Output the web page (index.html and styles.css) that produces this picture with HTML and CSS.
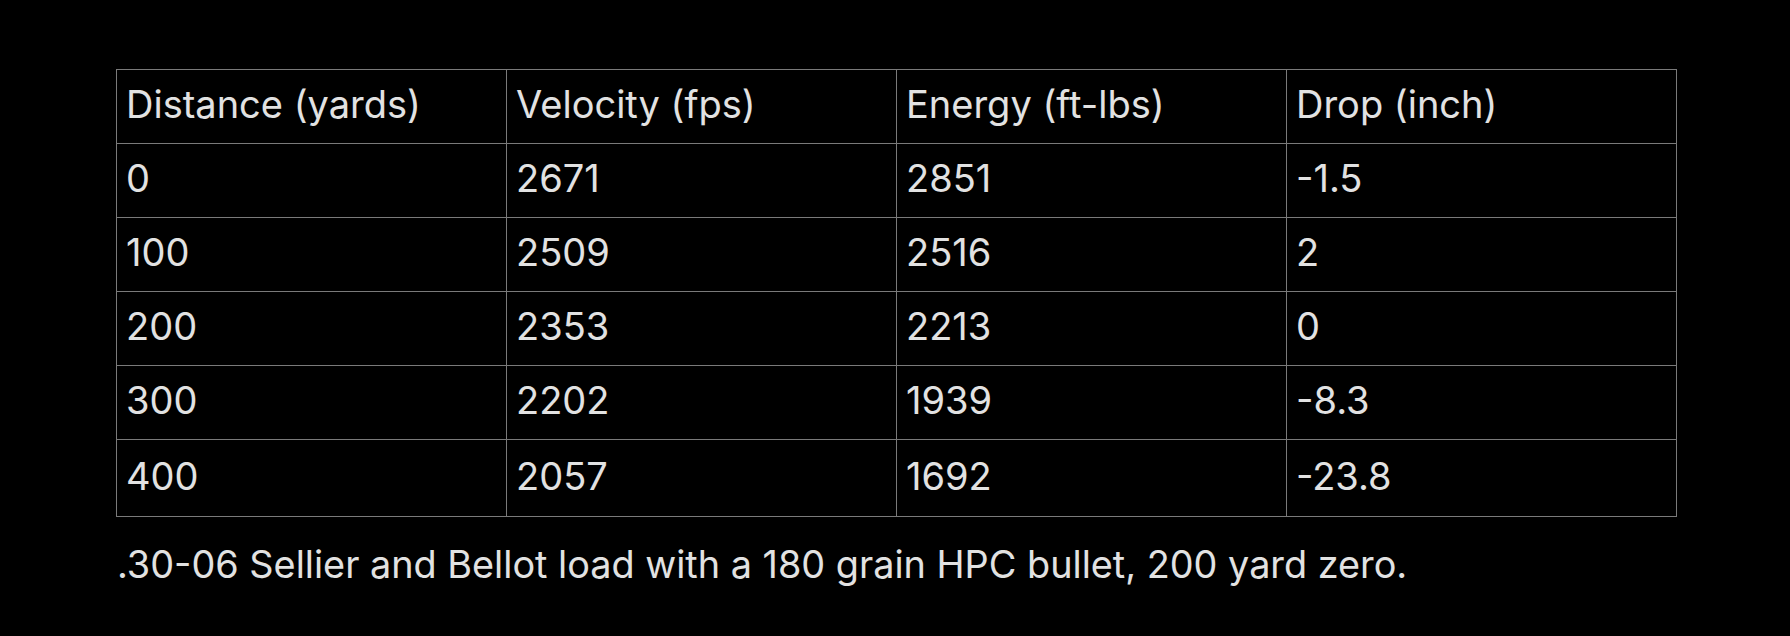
FILE: index.html
```html
<!DOCTYPE html>
<html>
<head>
<meta charset="utf-8">
<link rel="stylesheet" href="styles.css">
</head>
<body>
<div class="page">
  <table class="ballistics">
    <thead>
      <tr><th>Distance (yards)</th><th>Velocity (fps)</th><th>Energy (ft-lbs)</th><th>Drop (inch)</th></tr>
    </thead>
    <tbody>
      <tr><td>0</td><td>2671</td><td>2851</td><td>-1.5</td></tr>
      <tr><td>100</td><td>2509</td><td>2516</td><td>2</td></tr>
      <tr><td>200</td><td>2353</td><td>2213</td><td>0</td></tr>
      <tr><td>300</td><td>2202</td><td>1939</td><td>-8.3</td></tr>
      <tr class="last"><td>400</td><td>2057</td><td>1692</td><td>-23.8</td></tr>
    </tbody>
  </table>
  <p class="caption">.30-06 Sellier and Bellot load with a 180 grain HPC bullet, 200 yard zero.</p>
</div>
</body>
</html>
```
FILE: styles.css
```css
html, body {
  margin: 0;
  padding: 0;
  background: #000;
}
.page {
  padding: 69px 0 0 116px;
  font-family: Inter, "Noto Sans", sans-serif;
  color: #e2e2e2;
}
.ballistics {
  border-collapse: collapse;
  width: 1561px;
  table-layout: fixed;
  font-size: 38px;
}
.ballistics th,
.ballistics td {
  border: 1px solid #7a7a7a;
  font-weight: 400;
  text-align: left;
  padding: 0 9px 5px 9px;
  height: 68px;
  line-height: 46px;
  vertical-align: middle;
}
.ballistics tr.last td {
  height: 71px;
}
.caption {
  margin: 24px 0 0 1px;
  font-size: 37.8px;
  line-height: 46px;
}
```
